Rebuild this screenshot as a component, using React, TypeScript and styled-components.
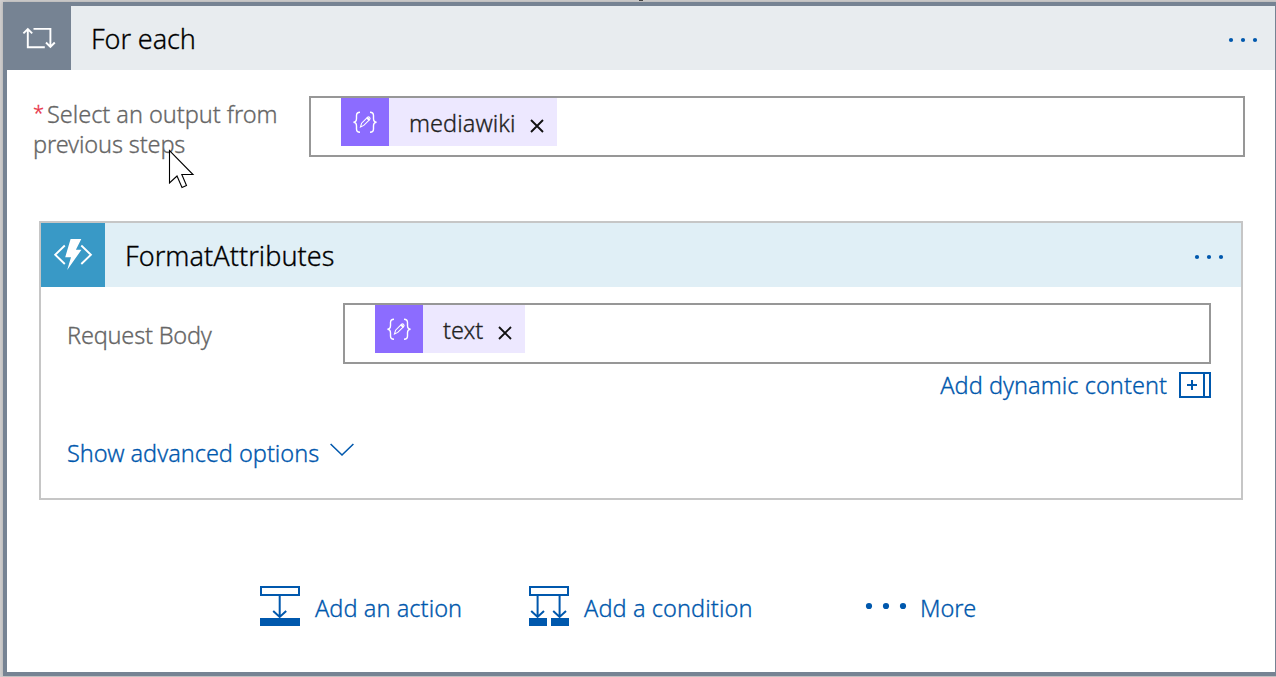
import React from "react";
import styled, { createGlobalStyle } from "styled-components";

const BLUE = "#0058ad";

const GlobalStyle = createGlobalStyle`
  * { box-sizing: border-box; }
  body {
    margin: 0;
    overflow: hidden;
    background: #dadada;
    font-family: "Noto Sans", "Open Sans", sans-serif;
    font-weight: 350;
  }
`;

const Canvas = styled.div`
  position: relative;
  width: 1276px;
  height: 677px;
  padding: 2px 0 0 3px;
  overflow: hidden;
  background: #d2d0d0;
`;

const ScopeCard = styled.section`
  width: 1276px;
  height: 674px;
  border: 4px solid #768393;
  background: #fff;
  box-shadow: 0 0 4px #aaa;
`;

const Header = styled.header<{ $bg: string }>`
  display: flex;
  align-items: center;
  height: 64px;
  background: ${(p) => p.$bg};
`;

const HeaderIcon = styled.div<{ $bg: string }>`
  width: 64px;
  height: 64px;
  flex: none;
  background: ${(p) => p.$bg};
  svg { display: block; }
`;

const Text = styled.span<{ $size?: number; $spacing?: number; $color?: string }>`
  font-size: ${(p) => p.$size ?? 23.5}px;
  letter-spacing: ${(p) => p.$spacing ?? 0}px;
  color: ${(p) => p.$color ?? "#666"};
  -webkit-text-stroke: 0.3px currentColor;
  line-height: 30px;
  white-space: nowrap;
`;

const Title = styled(Text)`
  flex: 1;
  margin: 2px 0 0 20px;
  line-height: 36px;
`;

const MenuButton = styled.button<{ $right: number }>`
  border: 0;
  padding: 0;
  margin: 4px ${(p) => p.$right}px 0 0;
  background: none;
  svg { display: block; }
`;

const FieldRow = styled.div<{ $pad: string }>`
  display: flex;
  align-items: flex-start;
  padding: ${(p) => p.$pad};
`;

const FieldLabel = styled.div<{ $width: number; $top: number }>`
  display: flex;
  flex-direction: column;
  width: ${(p) => p.$width}px;
  padding-top: ${(p) => p.$top}px;
  flex: none;
`;

const LabelLine = styled.div`
  display: flex;
  height: 30px;
`;

const Required = styled(Text)`
  width: 14px;
  font-size: 20px;
  line-height: 27px;
  color: #e8354a;
`;

const TokenInput = styled.div`
  display: flex;
  align-items: flex-start;
  flex: 1;
  height: 61px;
  padding-left: 30px;
  border: 2px solid #979797;
  background: #fff;
`;

const Token = styled.div<{ $width: number }>`
  display: flex;
  align-items: center;
  width: ${(p) => p.$width}px;
  height: 48px;
  background: #ede8ff;
`;

const TokenIcon = styled.div`
  width: 48px;
  height: 48px;
  flex: none;
  background: #8c6cff;
  svg { display: block; }
`;

const TokenName = styled(Text)`
  flex: 1;
  margin: 2px 0 0 20px;
`;

const TokenClose = styled.svg`
  flex: none;
  margin: 7px 12.5px 0 0;
`;

const ActionCard = styled.section`
  width: 1204px;
  height: 279px;
  margin: 62px 0 0 32px;
  border: 2px solid #c6c6c6;
  background: #fff;
`;

const LinkRow = styled.div<{ $pad: string; $gap: number; $end?: boolean }>`
  display: flex;
  align-items: center;
  justify-content: ${(p) => (p.$end ? "flex-end" : "flex-start")};
  gap: ${(p) => p.$gap}px;
  padding: ${(p) => p.$pad};
`;

const Chevron = styled.svg`
  margin-bottom: 7px;
`;

const Footer = styled.footer`
  display: flex;
  padding: 86px 0 0 253px;
`;

const FooterAction = styled.div<{ $width: number; $gap: number }>`
  display: flex;
  align-items: flex-start;
  gap: ${(p) => p.$gap}px;
  width: ${(p) => p.$width}px;
  svg { display: block; flex: none; }
  span { margin-top: 7px; }
`;

const ConnectorTip = styled.div`
  position: absolute;
  left: 639px;
  top: 0;
  width: 4px;
  height: 1px;
  background: #444;
`;

const Pointer = styled.svg`
  position: absolute;
  left: 168px;
  top: 149px;
`;

const Dots = () => (
  <svg width="30" height="6" viewBox="0 0 30 6" fill={BLUE}>
    <circle cx="3" cy="3" r="2.1" />
    <circle cx="15" cy="3" r="2.1" />
    <circle cx="27" cy="3" r="2.1" />
  </svg>
);

const LoopIcon = () => (
  <svg width="64" height="64" viewBox="7 6 64 64" fill="none" stroke="#fff" strokeWidth="1.9">
    <path d="M33.5 28.9H50.4V47M46 42.5L50.4 47L54.8 42.5" />
    <path d="M44.8 47.2H27.8V29M23.4 33.4L27.8 29L32.2 33.4" />
  </svg>
);

const FunctionIcon = () => (
  <svg width="64" height="64" viewBox="41 223 64 64">
    <path d="M64.8 245.5L55.2 254.8L64.8 264M81.3 245.5L90.9 254.8L81.3 264" fill="none" stroke="#fff" strokeWidth="1.9" />
    <path d="M70.6 239H81.3L75.9 249.7H81.5L67.2 270L71 257.2H65.2Z" fill="#fff" />
  </svg>
);

const ExpressionIcon = () => (
  <svg width="48" height="48" viewBox="0 0 48 48" fill="none" stroke="#fff" strokeWidth="1.4">
    <path d="M19 14.3C16.4 14.3 15.5 15.2 15.5 17.5V20.5C15.5 23 14.5 24.2 12.4 24.2C14.5 24.2 15.5 25.4 15.5 28V31C15.5 33.2 16.4 34.2 19 34.2" />
    <path d="M29 14.3C31.6 14.3 32.5 15.2 32.5 17.5V20.5C32.5 23 33.5 24.2 35.6 24.2C33.5 24.2 32.5 25.4 32.5 28V31C32.5 33.2 31.6 34.2 29 34.2" />
    <path d="M19.5 29L20.6 25.2L26.4 19.4C27.1 18.8 28 18.8 28.6 19.4C29.2 20 29.2 20.9 28.6 21.6L22.8 27.4Z" strokeWidth="1.1" />
    <path d="M25.2 20.3L27.8 22.9L29.2 21.4L26.6 18.8Z" fill="#fff" stroke="none" />
  </svg>
);

const CloseMark = () => (
  <TokenClose width="16" height="16" viewBox="0 0 16 16">
    <path d="M2 2L14 14M14 2L2 14" stroke="#111" strokeWidth="1.9" />
  </TokenClose>
);

const DynamicIcon = () => (
  <svg width="32" height="26" viewBox="0 0 32 26" fill="none" stroke={BLUE} strokeWidth="2">
    <path d="M1 1H31V25H1ZM25 1V25" />
    <path d="M8 13H18M13 8V18" strokeWidth="2" />
  </svg>
);

const AddActionIcon = () => (
  <svg width="40" height="40" viewBox="0 0 40 40" fill="none" stroke={BLUE}>
    <path d="M1 1H39V9H1Z" strokeWidth="2" />
    <path d="M19.7 10V31M13.2 25L19.7 31L26.2 25" strokeWidth="2" />
    <path d="M0 32H40V40H0Z" fill={BLUE} stroke="none" />
  </svg>
);

const AddConditionIcon = () => (
  <svg width="40" height="40" viewBox="0 0 40 40" fill="none" stroke={BLUE}>
    <path d="M1 1H39V9H1Z" strokeWidth="2" />
    <path d="M8.6 10V31M2.2 25L8.6 31L15 25M30.6 10V31M24.2 25L30.6 31L37 25" strokeWidth="2" />
    <path d="M0 32H18V40H0ZM22 32H40V40H22Z" fill={BLUE} stroke="none" />
  </svg>
);

const MoreDots = () => (
  <svg width="42" height="40" viewBox="0 0 42 40" fill={BLUE}>
    <circle cx="4" cy="20" r="3.1" />
    <circle cx="21" cy="20" r="3.1" />
    <circle cx="38" cy="20" r="3.1" />
  </svg>
);

function TokenPill({ name, width, spacing }: { name: string; width: number; spacing: number }) {
  return (
    <Token $width={width}>
      <TokenIcon><ExpressionIcon /></TokenIcon>
      <TokenName $color="#222" $spacing={spacing}>{name}</TokenName>
      <CloseMark />
    </Token>
  );
}

export default function App() {
  return (
    <>
      <GlobalStyle />
      <Canvas>
        <ConnectorTip />
        <ScopeCard>
          <Header $bg="#e8ecef">
            <HeaderIcon $bg="#768393"><LoopIcon /></HeaderIcon>
            <Title $size={27} $color="#000" $spacing={-0.1}>For each</Title>
            <MenuButton $right={17} aria-label="Scope menu"><Dots /></MenuButton>
          </Header>
          <FieldRow $pad="26px 30px 0 26px">
            <FieldLabel $width={276} $top={3}>
              <LabelLine>
                <Required>*</Required>
                <Text $spacing={-0.03}>Select an output from</Text>
              </LabelLine>
              <LabelLine><Text $spacing={-0.12}>previous steps</Text></LabelLine>
            </FieldLabel>
            <TokenInput><TokenPill name="mediawiki" width={216} spacing={0.05} /></TokenInput>
          </FieldRow>
          <ActionCard>
            <Header $bg="#e0eff6">
              <HeaderIcon $bg="#3999c6"><FunctionIcon /></HeaderIcon>
              <Title $size={27} $color="#000" $spacing={0.04}>FormatAttributes</Title>
              <MenuButton $right={17} aria-label="Action menu"><Dots /></MenuButton>
            </Header>
            <FieldRow $pad="16px 30px 0 26px">
              <FieldLabel $width={276} $top={17}>
                <Text $spacing={-0.2}>Request Body</Text>
              </FieldLabel>
              <TokenInput><TokenPill name="text" width={150} spacing={0} /></TokenInput>
            </FieldRow>
            <LinkRow $pad="6px 30px 0 0" $gap={12} $end>
              <Text $color={BLUE} $spacing={0.04}>Add dynamic content</Text>
              <DynamicIcon />
            </LinkRow>
            <LinkRow $pad="38px 0 0 26px" $gap={11}>
              <Text $color={BLUE} $spacing={-0.02}>Show advanced options</Text>
              <Chevron width="24" height="14" viewBox="0 0 24 14" fill="none" stroke={BLUE} strokeWidth="1.6">
                <path d="M0.6 1L12 12L23.4 1" />
              </Chevron>
            </LinkRow>
          </ActionCard>
          <Footer>
            <FooterAction $width={269} $gap={15}>
              <AddActionIcon />
              <Text $color={BLUE} $spacing={0.06}>Add an action</Text>
            </FooterAction>
            <FooterAction $width={336} $gap={15}>
              <AddConditionIcon />
              <Text $color={BLUE} $spacing={0.09}>Add a condition</Text>
            </FooterAction>
            <FooterAction $width={130} $gap={13}>
              <MoreDots />
              <Text $color={BLUE} $spacing={0}>More</Text>
            </FooterAction>
          </Footer>
        </ScopeCard>
        <Pointer width="28" height="42" viewBox="0 0 28 42">
          <path d="M1.5 1.5V34L9 27L14 38.5L18.5 36.5L13.8 25.5H25Z" fill="#fff" stroke="#000" strokeWidth="1.1" />
        </Pointer>
      </Canvas>
    </>
  );
}
